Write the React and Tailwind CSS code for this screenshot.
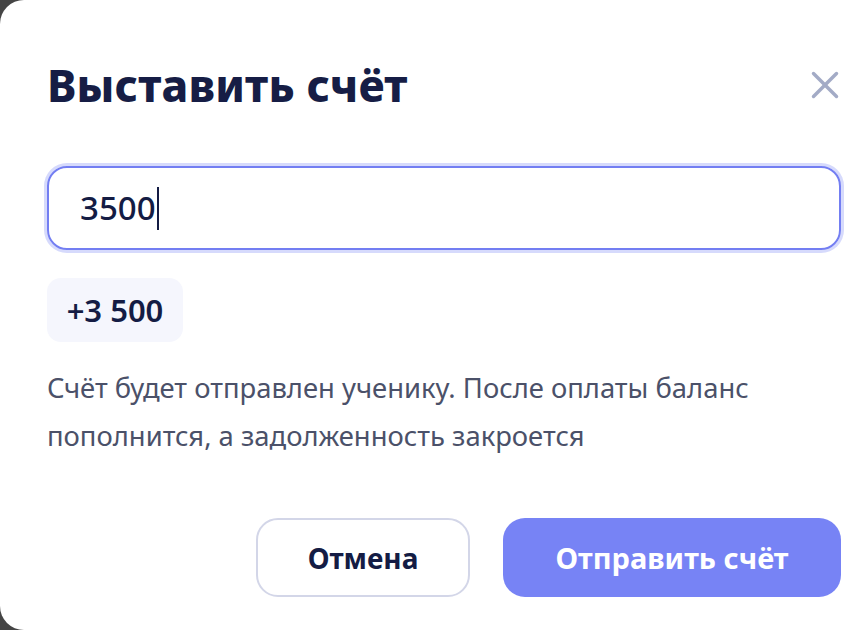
import { X } from "lucide-react";

const font = { fontFamily: '"Noto Sans", "Open Sans", sans-serif' };

function AmountField({ value }) {
  return (
    <div className="mt-[57px] mr-[15px] flex h-[84px] items-center rounded-[20px] border-2 border-[#737ef2] pl-[31px] ring-[3px] ring-[#d6dafc]">
      <span className="text-[33px] font-medium text-[#141c44]">{value}</span>
      <span className="ml-[1px] h-[43px] w-[2px] bg-[#141c44]" />
    </div>
  );
}

export default function App() {
  return (
    <div className="h-[630px] w-[856px] overflow-hidden bg-[#454545]" style={font}>
      <div className="flex h-[630px] w-[900px] flex-col rounded-l-[24px] bg-white pl-[47px]">
        <div className="mt-[61px] flex w-[801px] items-center justify-between">
          <h1 className="text-[44px] font-extrabold leading-[48px] tracking-[0.2px] text-[#161d45]">
            Выставить счёт
          </h1>
          <X className="h-[46px] w-[46px] text-[#a3abc6]" strokeWidth={1.8} />
        </div>

        <div className="w-[809px]">
          <AmountField value="3500" />
        </div>

        <div className="mt-[28px] flex">
          <div className="flex h-[64px] w-[136px] items-center justify-center rounded-[14px] bg-[#f5f6fd] text-[31px] font-semibold text-[#141c44]">
            +3 500
          </div>
        </div>

        <p className="mt-[22px] w-[780px] text-[27.4px] leading-[48px] text-[#4b5169]">
          Счёт будет отправлен ученику. После оплаты баланс пополнится, а задолженность закроется
        </p>

        <div className="mt-[58px] flex w-[794px] justify-end gap-[33px]">
          <button className="flex h-[79px] w-[214px] items-center justify-center rounded-[22px] border-2 border-[#d3d6e8] bg-white text-[28px] font-bold text-[#141c44]">
            Отмена
          </button>
          <button className="flex h-[79px] w-[338px] items-center justify-center rounded-[22px] bg-[#7783f5] text-[29px] font-bold text-white">
            Отправить счёт
          </button>
        </div>
      </div>
    </div>
  );
}
